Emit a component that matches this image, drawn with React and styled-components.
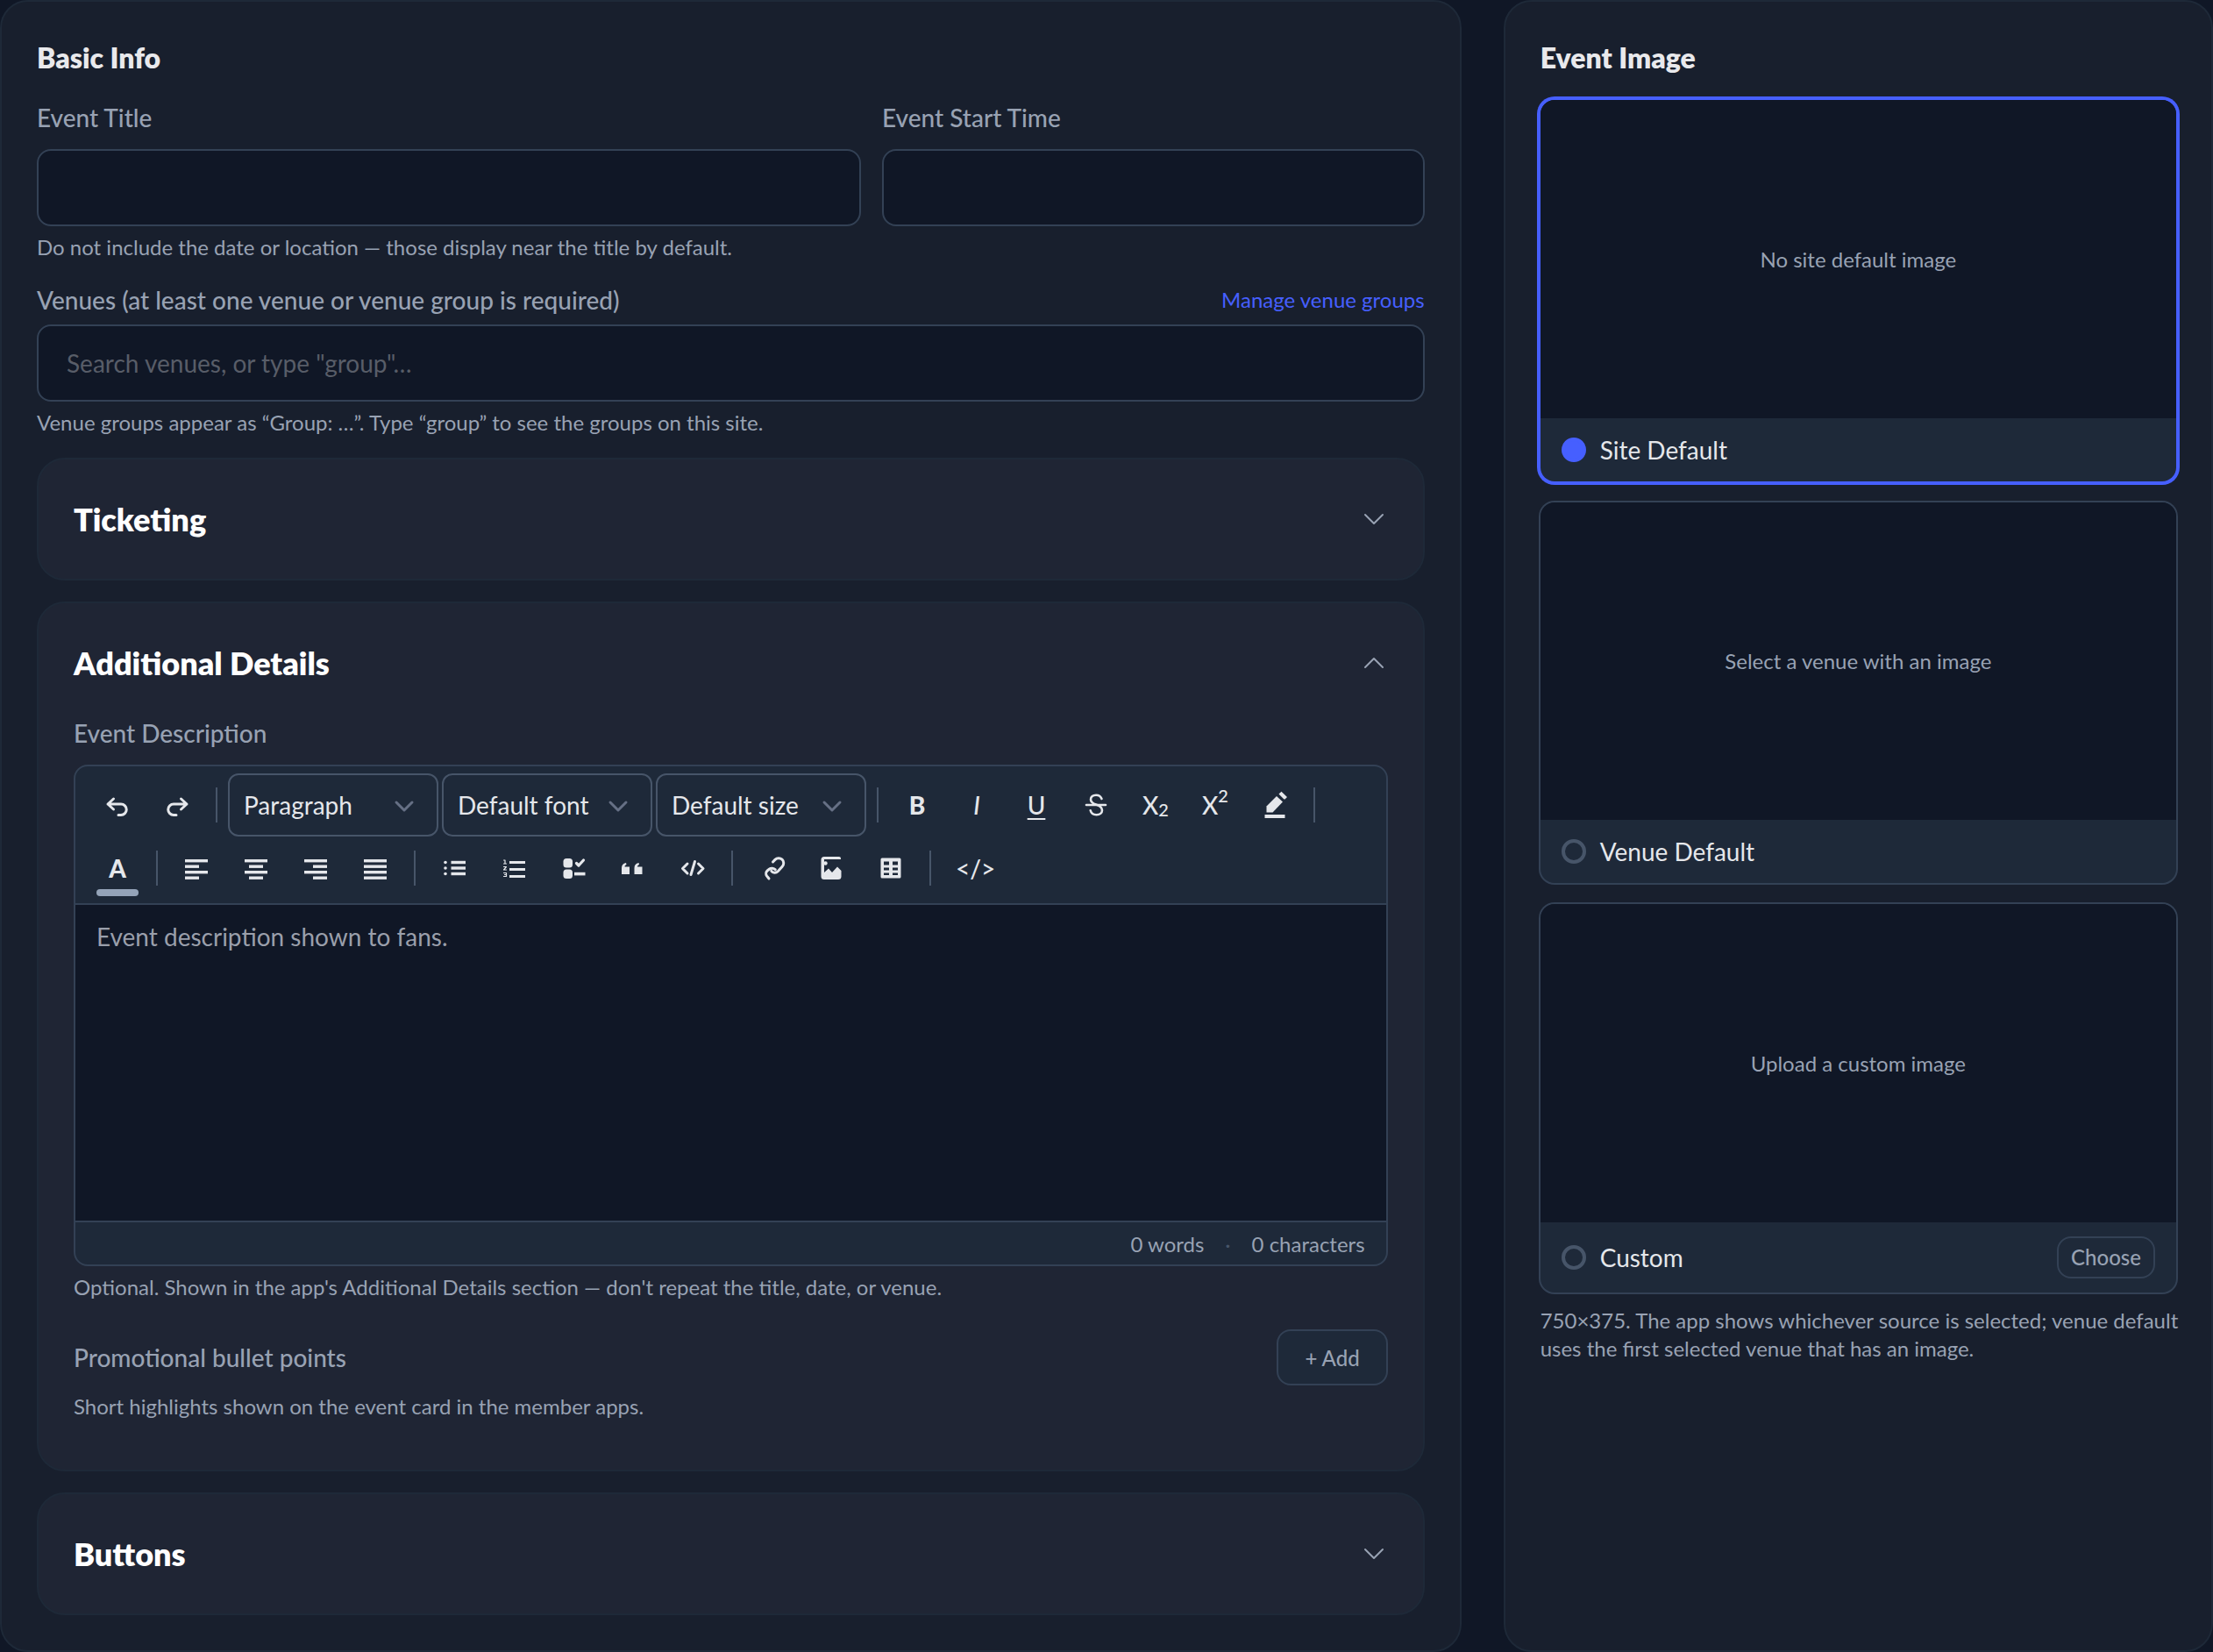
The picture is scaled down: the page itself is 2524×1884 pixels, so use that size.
import React, { useState } from 'react'

// Import styled
import styled, { createGlobalStyle, ThemeProvider } from 'styled-components';

// Import icons
import { HiOutlineChevronDown, HiOutlineChevronUp } from 'react-icons/hi2';

const theme = {
    page: '#101726',
    panel: '#181f2d',
    card: '#1f2534',
    raised: '#1e2939',
    line: '#334155',
    lineStrong: '#475569',
    edge: '#1e2938',
    primary: '#465fff',
    heading: '#e9e9ec',
    text: '#e5e7eb',
    muted: '#98a2b3',
    placeholder: '#585d68',
    icon: '#667085'
};

const GlobalStyle = createGlobalStyle`
    * {
        box-sizing: border-box;
    }

    body {
        margin: 0;
        background-color: ${ theme.page };
    }

    body, button, input, select, textarea {
        font-family: Lato, 'Liberation Sans', sans-serif;
    }

    h2, h3, p, fieldset {
        margin: 0;
        padding: 0;
        border: 0;
        min-width: 0;
    }
`;

const Page = styled.main`
    display: grid;
    grid-template-columns: repeat(12, minmax(0, 1fr));
    column-gap: 48px;
    min-height: 100vh;
`;

const Panel = styled.section`
    grid-column: span ${ props => props.$span };
    display: flex;
    flex-direction: column;
    gap: 24px;
    padding: 40px;
    border: 2px solid ${ props => props.theme.edge };
    border-radius: 32px;
    background-color: ${ props => props.theme.panel };
`;

const PanelTitle = styled.h2`
    color: ${ props => props.theme.heading };
    font-size: 32px;
    line-height: 48px;
    font-weight: 800;
`;

const FieldGrid = styled.div`
    display: grid;
    grid-template-columns: repeat(5, minmax(0, 1fr));
    column-gap: 24px;
`;

const Field = styled.div`
    grid-column: span ${ props => props.$span || 1 };
    display: flex;
    flex-direction: column;
`;

const FieldHeader = styled.div`
    display: flex;
    align-items: center;
    justify-content: space-between;
    margin-bottom: ${ props => props.$tight ? '8px' : '16px' };
`;

const Label = styled.label`
    color: ${ props => props.theme.muted };
    font-size: 28px;
    line-height: 40px;
    font-weight: 500;
`;

const TextLink = styled.a`
    color: ${ props => props.theme.primary };
    font-size: 24px;
    line-height: 32px;
    text-decoration: none;
`;

const TextInput = styled.input`
    width: 100%;
    height: 88px;
    padding: 0 32px;
    border: 2px solid ${ props => props.theme.line };
    border-radius: 16px;
    background-color: ${ props => props.theme.page };
    color: ${ props => props.theme.text };
    font-size: 28px;

    &::placeholder {
        color: ${ props => props.theme.placeholder };
        opacity: 1;
    }
`;

const Help = styled.p`
    margin-top: 8px;
    color: ${ props => props.theme.muted };
    font-size: 24px;
    line-height: 32px;
`;

const Card = styled.section`
    padding: 40px;
    border: 2px solid ${ props => props.theme.edge };
    border-radius: 32px;
    background-color: ${ props => props.theme.card };
`;

const CardToggle = styled.button`
    display: flex;
    align-items: center;
    justify-content: space-between;
    width: 100%;
    height: 56px;
    padding: 0;
    border: 0;
    background: none;
    color: white;
    font-size: 36px;
    font-weight: 800;
    cursor: pointer;

    svg {
        width: 32px;
        height: 32px;
        color: ${ props => props.theme.muted };
    }
`;

const CardBody = styled.div`
    padding: 32px 0 16px;
`;

const Editor = styled.div`
    overflow: hidden;
    border: 2px solid ${ props => props.theme.line };
    border-radius: 16px;
    background-color: ${ props => props.theme.raised };
`;

const Toolbar = styled.div`
    display: flex;
    flex-wrap: wrap;
    align-items: center;
    gap: 4px;
    padding: 8px 16px;
`;

const Separator = styled.span`
    width: 2px;
    height: 40px;
    margin: 0 8px;
    background-color: ${ props => props.theme.lineStrong };
`;

const ToolButton = styled.button`
    display: flex;
    align-items: center;
    justify-content: center;
    min-width: 64px;
    height: 64px;
    padding: 0 16px;
    border: 0;
    border-radius: 8px;
    background: none;
    color: ${ props => props.theme.text };
    font-size: 28px;
    line-height: 32px;
    font-weight: ${ props => props.$bold ? 900 : 500 };
    font-style: ${ props => props.$italic ? 'italic' : 'normal' };
    text-decoration: ${ props => props.$line || 'none' };
    text-underline-offset: 4px;
    cursor: pointer;

    sub, sup {
        font-size: 20px;
        line-height: 0;
    }

    sub {
        vertical-align: -2px;
    }

    sup {
        vertical-align: 14px;
    }

    svg {
        flex: none;
        width: 32px;
        height: 32px;
    }
`;

const ColorButton = styled(ToolButton)`
    flex-direction: column;
    justify-content: flex-end;
    gap: 8px;
    padding: 0 8px;

    &::after {
        content: '';
        width: 48px;
        height: 8px;
        border-radius: 4px;
        background-color: #94a3b8;
    }
`;

const SelectWrap = styled.div`
    position: relative;

    svg {
        position: absolute;
        top: 22px;
        right: 24px;
        width: 30px;
        height: 30px;
        color: ${ props => props.theme.icon };
        pointer-events: none;
    }
`;

const Select = styled.select`
    appearance: none;
    width: 240px;
    height: 72px;
    padding: 0 56px 0 16px;
    border: 2px solid ${ props => props.theme.lineStrong };
    border-radius: 12px;
    background-color: transparent;
    color: ${ props => props.theme.text };
    font-size: 28px;
`;

const EditorText = styled.textarea`
    display: block;
    width: 100%;
    height: 364px;
    padding: 16px 24px;
    border: 0;
    border-top: 2px solid ${ props => props.theme.line };
    border-bottom: 2px solid ${ props => props.theme.line };
    background-color: ${ props => props.theme.page };
    color: ${ props => props.theme.text };
    font-size: 28px;
    line-height: 40px;
    resize: none;

    &::placeholder {
        color: #9a9fab;
        opacity: 1;
    }
`;

const EditorFooter = styled.div`
    display: flex;
    align-items: center;
    justify-content: flex-end;
    gap: 24px;
    height: 48px;
    padding: 0 24px;
    color: ${ props => props.theme.muted };
    font-size: 24px;

    i {
        color: ${ props => props.theme.lineStrong };
        font-style: normal;
    }
`;

const BulletRow = styled.div`
    display: flex;
    align-items: center;
    justify-content: space-between;
    margin-top: 32px;
    color: ${ props => props.theme.muted };
    font-size: 28px;
    font-weight: 500;
`;

const SmallButton = styled.button`
    height: ${ props => props.$compact ? '48px' : '64px' };
    padding: 0 ${ props => props.$compact ? '14px' : '30px' };
    border: 2px solid ${ props => props.theme.line };
    border-radius: 16px;
    background-color: ${ props => props.theme.raised };
    color: ${ props => props.theme.muted };
    font-size: 24px;
    font-weight: 500;
    cursor: pointer;
`;

const ImageOptions = styled.fieldset`
    display: flex;
    flex-direction: column;
    gap: 24px;
`;

// The note runs slightly past the cards on the right
const ImageNote = styled(Help)`
    margin: 16px -8px 0 0;
`;

const ImageOption = styled.div`
    overflow: hidden;
    border-radius: 16px;
    background-color: ${ props => props.theme.raised };
    box-shadow: ${ props => props.$active ? `0 0 0 4px ${ props.theme.primary }` : `0 0 0 2px ${ props.theme.line }` };
`;

const Preview = styled.div`
    display: flex;
    align-items: center;
    justify-content: center;
    aspect-ratio: 2 / 1;
    background-color: ${ props => props.theme.page };
    color: ${ props => props.theme.muted };
    font-size: 24px;
`;

const OptionFooter = styled.div`
    display: flex;
    align-items: center;
    justify-content: space-between;
    padding: 16px 24px;

    label {
        display: flex;
        align-items: center;
        gap: 16px;
        color: ${ props => props.theme.text };
        font-size: 28px;
        line-height: 40px;
    }
`;

const Radio = styled.input`
    appearance: none;
    width: 28px;
    height: 28px;
    margin: 0;
    border: 4px solid ${ props => props.theme.lineStrong };
    border-radius: 50%;

    &:checked {
        border-color: ${ props => props.theme.primary };
        background-color: ${ props => props.theme.primary };
    }
`;

const Icon = ({ children, solid }) => (
    <svg
        viewBox='0 0 32 32'
        fill={solid ? 'currentColor' : 'none'}
        stroke={solid ? 'none' : 'currentColor'}
        strokeWidth='3'
        strokeLinecap='round'
        strokeLinejoin='round'
        aria-hidden='true'
    >
        {children}
    </svg>
);

// Start and width of each of the four bars of an alignment icon
const alignments = {
    'Align left': [[3, 26], [3, 16], [3, 26], [3, 16]],
    'Align center': [[3, 26], [8, 16], [3, 26], [8, 16]],
    'Align right': [[3, 26], [13, 16], [3, 26], [13, 16]],
    'Justify': [[3, 26], [3, 26], [3, 26], [3, 26]]
};

const ToolSelect = ({ label }) => (
    <SelectWrap>
        <Select aria-label={label}>
            <option>{label}</option>
        </Select>
        <svg viewBox='0 0 30 30' fill='none' stroke='currentColor' strokeWidth='3' strokeLinecap='round' strokeLinejoin='round' aria-hidden='true'>
            <path d='M6 11l9 9 9-9' />
        </svg>
    </SelectWrap>
);

const EditorToolbar = () => (
    <Toolbar role='toolbar' aria-label='Formatting'>
        <ToolButton aria-label='Undo'>
            <Icon><path d='M11.500 9 5 15l6.500 6M5 15h15a5.800 5.800 0 0 1 0 12.500h-3' /></Icon>
        </ToolButton>
        <ToolButton aria-label='Redo'>
            <Icon><path d='M20.500 9 27 15l-6.500 6M27 15H12a5.800 5.800 0 0 0 0 12.500h3' /></Icon>
        </ToolButton>
        <Separator />
        <ToolSelect label='Paragraph' />
        <ToolSelect label='Default font' />
        <ToolSelect label='Default size' />
        <Separator />
        <ToolButton $bold aria-label='Bold'>B</ToolButton>
        <ToolButton $italic aria-label='Italic'>I</ToolButton>
        <ToolButton $line='underline' aria-label='Underline'>U</ToolButton>
        <ToolButton aria-label='Strikethrough'>
            <Icon>
                <path d='M22.500 9c-1-2.700-3.200-4.300-6.400-4.300-3.600 0-6.100 2-6.100 5 0 2.600 1.600 4.300 6 5.800 5 1.600 7 3.500 7 6.400 0 3.100-2.600 5.300-6.500 5.300-3.500 0-6-1.800-6.800-4.900' strokeWidth='2.600' />
                <path d='M5 16h22' strokeWidth='2.600' />
            </Icon>
        </ToolButton>
        <ToolButton aria-label='Subscript'><span>X<sub>2</sub></span></ToolButton>
        <ToolButton aria-label='Superscript'><span>X<sup>2</sup></span></ToolButton>
        <ToolButton aria-label='Highlight'>
            <Icon solid>
                <path d='M6.500 24.500v-7L18 6l7 6.500-11.500 12z' />
                <path d='M20.500 3.500 23.500.8 30 7l-2.500 2.500c-1 0-1.700-.4-2.300-1.300z' />
                <rect x='4.500' y='27' width='23' height='4' />
            </Icon>
        </ToolButton>
        <Separator />
        <ColorButton $bold aria-label='Text color'>A</ColorButton>
        <Separator />
        {Object.keys(alignments).map(name => (
            <ToolButton key={name} aria-label={name}>
                <Icon solid>
                    {alignments[name].map(([x, width], i) => (
                        <rect key={i} x={x} y={6 + i * 6.5} width={width} height='3.400' />
                    ))}
                </Icon>
            </ToolButton>
        ))}
        <Separator />
        <ToolButton aria-label='Bulleted list'>
            <Icon solid>
                {[9.5, 16, 22.5].map(y => (
                    <g key={y}>
                        <circle cx='6' cy={y} r='1.800' />
                        <rect x='12.500' y={y - 1.7} width='16.500' height='3.400' />
                    </g>
                ))}
            </Icon>
        </ToolButton>
        <ToolButton aria-label='Numbered list'>
            <Icon>
                <path d='M4.500 7H6v4M4.500 11h3M4.500 14.500h3l-3 3.500h3M4.500 21.500h3v4h-3M5.500 23.500h2' strokeWidth='1.200' />
                <path d='M12.500 9.500h15M12.500 17.500h15M12.500 25.500h15' strokeLinecap='square' />
            </Icon>
        </ToolButton>
        <ToolButton aria-label='Checklist'>
            <Icon solid>
                <rect x='4.500' y='5' width='10.500' height='10.500' rx='3.500' />
                <rect x='4.500' y='17.500' width='10.500' height='10.500' rx='3.500' />
                <path d='M19.500 10.500 22 13l5.500-6' fill='none' stroke='currentColor' strokeWidth='3.200' />
                <rect x='17' y='20.800' width='12.500' height='3.600' />
            </Icon>
        </ToolButton>
        <ToolButton aria-label='Quote'>
            <Icon solid>
                <path d='M3 23v-7c0-3.400 1.700-5.500 5-6l.5 2c-1.300.5-2 1.400-2 2.500H12V23z' />
                <path d='M17.500 23v-7c0-3.400 1.700-5.500 5-6l.5 2c-1.300.5-2 1.400-2 2.500h5.500V23z' />
            </Icon>
        </ToolButton>
        <ToolButton aria-label='Code'>
            <Icon>
                <path d='M10 11l-5.500 5.500L10 22M22.500 11l5.500 5.500-5.500 5.500M18.500 8.500l-4.500 15' />
            </Icon>
        </ToolButton>
        <Separator />
        <ToolButton aria-label='Link'>
            <Icon>
                <path d='M17.500 9 20 6.400a5.600 5.600 0 0 1 8.200 7.800l-5 5.500c-2.200 2.300-5.700 2-7.400-.4' />
                <path d='M13 28l-2.500-3.200a4.500 4.500 0 0 1 .9-6.100l1.900-1.500c2-1.600 5.300-1.400 7 .6' />
            </Icon>
        </ToolButton>
        <ToolButton aria-label='Image'>
            <Icon solid>
                <path d='M27 6V5a2 2 0 0 0-2-2H8a3.500 3.500 0 0 0-3.500 3.500v19A3.500 3.500 0 0 0 8 29h16a3.500 3.500 0 0 0 3.500-3.500V19L23 14.500l-6 6.500-4-4.500L8 21V6z' />
                <circle cx='9.500' cy='10.500' r='2.200' />
            </Icon>
        </ToolButton>
        <ToolButton aria-label='Table'>
            <Icon solid>
                <path
                    fillRule='evenodd'
                    d='M6 4.500h20A1.500 1.500 0 0 1 27.500 6v20a1.500 1.500 0 0 1-1.500 1.500H6A1.500 1.500 0 0 1 4.500 26V6A1.500 1.500 0 0 1 6 4.500zM8 8.500v4h6v-4zM18 8.500v4h6v-4zM8 15.500v3h6v-3zM18 15.500v3h6v-3zM8 21.500v2.500h6v-2.500zM18 21.500v2.500h6v-2.500z'
                />
            </Icon>
        </ToolButton>
        <Separator />
        <ToolButton aria-label='HTML source'>{'</>'}</ToolButton>
    </Toolbar>
);

const CollapsibleCard = ({ title, defaultOpen = false, children }) => {
    const [open, setOpen] = useState(defaultOpen);

    return (
        <Card>
            <h3>
                <CardToggle aria-expanded={open} onClick={() => setOpen(!open)}>
                    {title}
                    {open ? <HiOutlineChevronUp /> : <HiOutlineChevronDown />}
                </CardToggle>
            </h3>
            {open && children && <CardBody>{children}</CardBody>}
        </Card>
    );
};

const imageSources = [
    { id: 'site', label: 'Site Default', empty: 'No site default image' },
    { id: 'venue', label: 'Venue Default', empty: 'Select a venue with an image' },
    { id: 'custom', label: 'Custom', empty: 'Upload a custom image' }
];

const EventImage = () => {
    const [source, setSource] = useState('site');

    return (
        <Panel $span={4}>
            <PanelTitle>Event Image</PanelTitle>
            <div>
                <ImageOptions aria-label='Event Image'>
                    {imageSources.map(({ id, label, empty }) => (
                        <ImageOption key={id} $active={source === id}>
                            <Preview>{empty}</Preview>
                            <OptionFooter>
                                <label>
                                    <Radio type='radio' name='image-source' checked={source === id} onChange={() => setSource(id)} />
                                    {label}
                                </label>
                                {id === 'custom' && <SmallButton $compact>Choose</SmallButton>}
                            </OptionFooter>
                        </ImageOption>
                    ))}
                </ImageOptions>
                <ImageNote>
                    750×375. The app shows whichever source is selected; venue default uses the first selected venue that has an image.
                </ImageNote>
            </div>
        </Panel>
    );
};

const App = () => (
    <ThemeProvider theme={theme}>
        <GlobalStyle />
        <Page>
            <Panel $span={8}>
                <PanelTitle>Basic Info</PanelTitle>
                <FieldGrid>
                    <Field $span={3}>
                        <FieldHeader><Label htmlFor='title'>Event Title</Label></FieldHeader>
                        <TextInput id='title' />
                        <Help>Do not include the date or location — those display near the title by default.</Help>
                    </Field>
                    <Field $span={2}>
                        <FieldHeader><Label htmlFor='start'>Event Start Time</Label></FieldHeader>
                        <TextInput id='start' />
                    </Field>
                </FieldGrid>
                <Field>
                    <FieldHeader $tight>
                        <Label htmlFor='venues'>Venues (at least one venue or venue group is required)</Label>
                        <TextLink href='#groups'>Manage venue groups</TextLink>
                    </FieldHeader>
                    <TextInput id='venues' placeholder='Search venues, or type "group"…' />
                    <Help>Venue groups appear as “Group: …”. Type “group” to see the groups on this site.</Help>
                </Field>
                <CollapsibleCard title='Ticketing' />
                <CollapsibleCard title='Additional Details' defaultOpen>
                    <FieldHeader><Label htmlFor='description'>Event Description</Label></FieldHeader>
                    <Editor>
                        <EditorToolbar />
                        <EditorText id='description' placeholder='Event description shown to fans.' />
                        <EditorFooter>
                            <span>0 words</span>
                            <i>·</i>
                            <span>0 characters</span>
                        </EditorFooter>
                    </Editor>
                    <Help>Optional. Shown in the app's Additional Details section — don't repeat the title, date, or venue.</Help>
                    <BulletRow>
                        <span>Promotional bullet points</span>
                        <SmallButton>+ Add</SmallButton>
                    </BulletRow>
                    <Help>Short highlights shown on the event card in the member apps.</Help>
                </CollapsibleCard>
                <CollapsibleCard title='Buttons' />
            </Panel>
            <EventImage />
        </Page>
    </ThemeProvider>
);

export default App;
